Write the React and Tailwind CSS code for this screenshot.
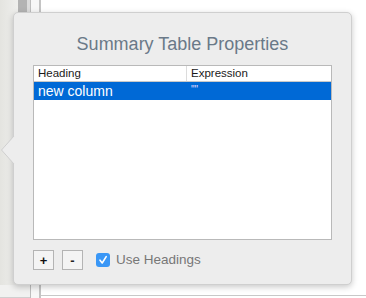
export default function App() {
  return (
    <div
      className="relative flex h-[298px] w-[366px] flex-col overflow-hidden bg-white"
      style={{ fontFamily: '"Liberation Sans", Arial, sans-serif' }}
    >
      {/* window behind the popover */}
      <div className="flex flex-1">
        <div className="w-[18px] bg-gradient-to-r from-[#e4e4e0] to-[#efefed]" />
        <div className="w-[9px] bg-[#b3b3b3]" />
        <div className="w-[3px] bg-[#dcdcdc]" />
        <div className="w-px bg-[#bdbdbd]" />
        <div className="w-[8px] bg-[#f7f7f7]" />
        <div className="w-[2px] bg-[#c4c4c4]" />
        <div className="flex-1" />
      </div>
      <div className="flex h-[13px]">
        <div className="w-[30px] border-b border-[#cfcfcf] bg-[#f1f1f0]" />
        <div className="w-px bg-[#bdbdbd]" />
        <div className="w-[8px] bg-[#f7f7f7]" />
        <div className="w-[2px] bg-[#c4c4c4]" />
        <div className="flex flex-1 flex-col">
          <div className="flex-1" />
          <div className="mb-[2px] h-px bg-[#c8c8c8]" />
        </div>
      </div>

      {/* popover */}
      <div className="absolute left-[13px] top-[12px] flex h-[273px] w-[339px] flex-col rounded-[5px] border border-[#cfcfcf] bg-[#ededed] px-[19px] pt-[20px] shadow-[0_2px_6px_rgba(0,0,0,0.22)]">
        <h1 className="text-center text-[18px] leading-[22px] text-[#6a7988]">
          Summary Table Properties
        </h1>

        <div className="mt-[10px] flex h-[175px] flex-col border border-[#b9b9b9] bg-white">
          <div className="flex h-[16px] border-b border-[#c9c9c9] text-[11.5px] leading-[15px] text-[#1a1a1a]">
            <div className="w-[153px] border-r border-[#dcdcdc] pl-[4px]">
              Heading
            </div>
            <div className="pl-[4px]">Expression</div>
          </div>
          <div className="flex h-[18px] bg-[#0069d6] text-white">
            <div className="w-[153px] pl-[4px] text-[14px] leading-[18px]">
              new column
            </div>
            <div className="pl-[4px] text-[10px] leading-[16px] text-[#e6dcff]">
              ""
            </div>
          </div>
          <div className="flex-1" />
        </div>

        <div className="mt-[10px] flex items-center">
          <button className="flex h-[20px] w-[21px] items-center justify-center border border-[#b4b4b4] bg-[#f4f4f4] text-[13px] font-bold leading-none text-[#111]">
            +
          </button>
          <button className="ml-[8px] flex h-[20px] w-[21px] items-center justify-center border border-[#b4b4b4] bg-[#f4f4f4] text-[13px] font-bold leading-none text-[#222]">
            -
          </button>
          <div className="ml-[13px] flex h-[14px] w-[14px] items-center justify-center rounded-[3px] bg-[#3a97f6]">
            <svg width="10" height="10" viewBox="0 0 10 10">
              <path
                d="M2 5.2 L4.2 8 L8.2 1.6"
                fill="none"
                stroke="white"
                strokeWidth="1.6"
                strokeLinecap="round"
                strokeLinejoin="round"
              />
            </svg>
          </div>
          <span className="ml-[6px] text-[13.5px] text-[#777]">Use Headings</span>
        </div>
      </div>

      {/* arrow */}
      <svg
        className="absolute left-0 top-[136px]"
        width="15"
        height="28"
        viewBox="0 0 15 28"
      >
        <polygon points="14,0 1.5,14 14,28" fill="#ededed" />
        <polyline
          points="14,0 1.5,14 14,28"
          fill="none"
          stroke="#cfcfcf"
          strokeWidth="1"
        />
      </svg>
    </div>
  );
}
